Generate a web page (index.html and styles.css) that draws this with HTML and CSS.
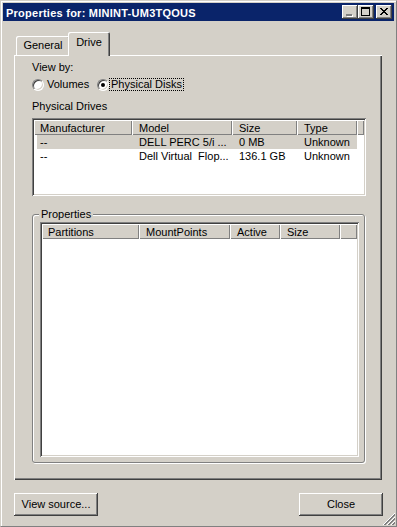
FILE: index.html
```html
<!DOCTYPE html>
<html>
<head>
<meta charset="utf-8">
<title>Properties</title>
<link rel="stylesheet" href="styles.css">
</head>
<body>
<div class="window">
  <div class="titlebar">
    <span class="title">Properties for: MININT-UM3TQOUS</span>
    <div class="caption">
      <span class="cbtn"><svg width="16" height="14" viewBox="0 0 16 14"><rect x="5" y="10" width="6" height="2" fill="#fff"/><rect x="4" y="9" width="6" height="2" fill="#808080"/></svg></span>
      <span class="cbtn"><svg width="16" height="14" viewBox="0 0 16 14"><path d="M3 2h9v2h-9z M3 4h1v6h-1z M11 4h1v6h-1z M3 10h9v1h-9z" fill="#000"/></svg></span>
      <span class="cbtn close"><svg width="16" height="14" viewBox="0 0 16 14"><path d="M4 3h2v1h-2z M10 3h2v1h-2z M5 4h2v1h-2z M9 4h2v1h-2z M6 5h4v1h-4z M7 6h2v1h-2z M6 7h4v1h-4z M5 8h2v1h-2z M9 8h2v1h-2z M4 9h2v1h-2z M10 9h2v1h-2z" fill="#000"/></svg></span>
    </div>
  </div>

  <div class="tabs">
    <div class="tab">General</div>
    <div class="tab active">Drive</div>
  </div>

  <div class="panel">
    <div class="text">View by:</div>
    <div class="radios">
      <div class="radio r1"><span class="rb"></span><span class="rl">Volumes</span></div>
      <div class="radio"><span class="rb on"></span><span class="rl focus">Physical Disks</span></div>
    </div>
    <div class="text section">Physical Drives</div>

    <div class="list drives">
      <div class="hdr">
        <div class="hc d1 first">Manufacturer</div>
        <div class="hc d2">Model</div>
        <div class="hc d3">Size</div>
        <div class="hc d4">Type</div>
        <div class="hc fill"></div>
      </div>
      <div class="row sel">
        <div class="cell d1 first">--</div>
        <div class="cell d2">DELL PERC 5/i ...</div>
        <div class="cell d3">0 MB</div>
        <div class="cell d4">Unknown</div>
      </div>
      <div class="row">
        <div class="cell d1 first">--</div>
        <div class="cell d2">Dell Virtual  Flop...</div>
        <div class="cell d3">136.1 GB</div>
        <div class="cell d4">Unknown</div>
      </div>
    </div>

    <div class="group">
      <span class="legend">Properties</span>
      <div class="list parts">
        <div class="hdr">
          <div class="hc p1 first">Partitions</div>
          <div class="hc p2">MountPoints</div>
          <div class="hc p3">Active</div>
          <div class="hc p4">Size</div>
          <div class="hc fill"></div>
        </div>
      </div>
    </div>
  </div>

  <div class="buttons">
    <button class="btn">View source...</button>
    <button class="btn">Close</button>
  </div>

  <svg class="grip" width="12" height="12" viewBox="0 0 12 12">
    <path d="M12 0L0 12 M12 4L4 12 M12 8L8 12" stroke="#fff" stroke-width="1"/>
    <path d="M12 1L1 12 M12 2L2 12 M12 5L5 12 M12 6L6 12 M12 9L9 12 M12 10L10 12" stroke="#808080" stroke-width="1"/>
  </svg>
</div>
</body>
</html>
```

FILE: styles.css
```css
* { box-sizing: border-box; }
html, body { margin: 0; padding: 0; }
body {
  background: #d4d0c8;
  font-family: "Liberation Sans", Arial, sans-serif;
  font-size: 11px;
  line-height: 13px;
  color: #000;
}

.window {
  position: relative;
  width: 397px;
  height: 527px;
  background: #d4d0c8;
  border: 1px solid;
  border-color: #d4d0c8 #808080 #808080 #d4d0c8;
  box-shadow: inset 1px 1px 0 #fff;
  padding: 2px;
  display: flex;
  flex-direction: column;
  overflow: hidden;
}

/* title bar */
.titlebar {
  height: 18px;
  flex: none;
  background: #0a246a;
  color: #fff;
  display: flex;
  align-items: flex-start;
  padding: 2px 2px 0 3px;
}
.title {
  flex: 1;
  font-weight: bold;
  line-height: 16px;
  letter-spacing: 0.25px;
  white-space: nowrap;
}
.caption { display: flex; }
.cbtn {
  display: block;
  width: 16px;
  height: 14px;
  background: #d4d0c8;
  box-shadow: inset -1px -1px 0 #404040, inset 1px 1px 0 #fff, inset -2px -2px 0 #808080;
}
.cbtn svg { display: block; }
.cbtn.close { margin-left: 2px; }

/* tabs */
.tabs {
  display: flex;
  align-items: flex-end;
  margin: 11px 0 0 13px;
  flex: none;
}
.tab {
  width: 54px;
  height: 19px;
  padding-top: 3px;
  text-align: center;
  background: #d4d0c8;
  border-radius: 2px 2px 0 0;
  box-shadow: inset 1px 1px 0 #fff, inset -1px 0 0 #404040, inset -2px 0 0 #808080;
}
.tab.active {
  width: 42px;
  height: 24px;
  padding-top: 4px;
  margin-left: -2px;
  margin-bottom: -1px;
  position: relative;
  z-index: 1;
}

/* panel */
.panel {
  flex: none;
  margin-left: 11px;
  width: 368px;
  height: 425px;
  padding: 6px 0 0 18px;
  box-shadow: inset 1px 1px 0 #fff, inset -1px -1px 0 #404040, inset -2px -2px 0 #808080;
}
.text { white-space: nowrap; }
.section { margin-top: 9px; }

.radios {
  display: flex;
  align-items: center;
  margin-top: 4px;
  height: 13px;
}
.radio { display: flex; align-items: center; }
.r1 { width: 65px; }
.rb {
  width: 12px;
  height: 12px;
  border-radius: 50%;
  background: #fff;
  border: 1px solid;
  border-color: #808080 #fff #fff #808080;
  box-shadow: inset 1px 1px 0 #404040, inset -1px -1px 0 #d4d0c8;
  display: flex;
  align-items: center;
  justify-content: center;
  flex: none;
}
.rb.on::after {
  content: "";
  width: 4px;
  height: 4px;
  border-radius: 50%;
  background: #000;
}
.rl { margin-left: 3px; white-space: nowrap; }
.rl.focus {
  margin-left: 0;
  padding: 0 1px;
  border: 1px dotted #000;
  line-height: 11px;
}

/* list views */
.list {
  background: #fff;
  padding: 2px;
  box-shadow: inset 1px 1px 0 #808080, inset -1px -1px 0 #fff, inset 2px 2px 0 #404040, inset -2px -2px 0 #d4d0c8;
  overflow: hidden;
}
.drives {
  margin-top: 5px;
  width: 334px;
  height: 78px;
}
.hdr { display: flex; height: 15px; }
.hc {
  flex: none;
  height: 15px;
  padding: 2px 0 0 7px;
  background: #d4d0c8;
  box-shadow: inset 1px 1px 0 #fff, inset -1px -1px 0 #808080;
  white-space: nowrap;
  overflow: hidden;
}
.hc.first, .cell.first { padding-left: 6px; }
.hc.fill { flex: 1; }
.d1 { width: 98px; }
.d2 { width: 100px; }
.d3 { width: 65px; }
.d4 { width: 60px; }
.p1 { width: 97px; }
.p2 { width: 91px; }
.p3 { width: 50px; }
.p4 { width: 60px; }

.row {
  display: flex;
  height: 14px;
  line-height: 14px;
  width: 323px;
}
.row.sel { background: linear-gradient(90deg, transparent 3px, #d4d0c8 3px); }
.cell {
  flex: none;
  padding-left: 7px;
  white-space: pre;
  overflow: hidden;
}

/* group box */
.group {
  position: relative;
  margin-top: 18px;
  width: 333px;
  height: 249px;
  border: 1px solid #808080;
  border-radius: 3px;
  box-shadow: inset 1px 1px 0 #fff, 1px 1px 0 #fff;
  padding: 7px 5px 5px 7px;
}
.legend {
  position: absolute;
  top: -7px;
  left: 6px;
  padding: 0 2px;
  background: #d4d0c8;
  white-space: nowrap;
}
.parts {
  width: 319px;
  height: 235px;
}

/* buttons */
.buttons {
  display: flex;
  justify-content: space-between;
  margin: 13px 0 0 11px;
  width: 369px;
  flex: none;
}
.btn {
  width: 84px;
  height: 23px;
  padding: 0;
  border: 0;
  background: #d4d0c8;
  font: inherit;
  line-height: 13px;
  color: #000;
  box-shadow: inset -1px -1px 0 #404040, inset 1px 1px 0 #fff, inset -2px -2px 0 #808080;
}

.grip {
  position: absolute;
  right: 1px;
  bottom: 1px;
}
```
